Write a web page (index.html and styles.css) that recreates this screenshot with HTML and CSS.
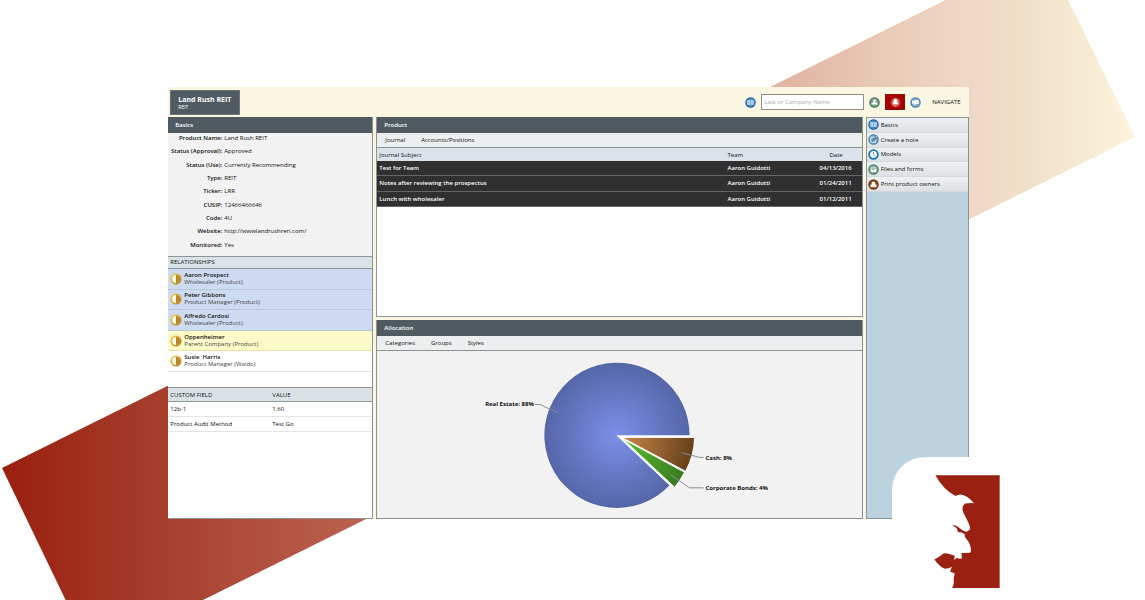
FILE: index.html
```html
<!DOCTYPE html>
<html lang="en">
<head>
<meta charset="utf-8">
<title>Land Rush REIT</title>
<link rel="stylesheet" href="styles.css">
</head>
<body>
<svg class="backdrop" viewBox="0 0 1145 600" preserveAspectRatio="xMidYMin slice" aria-hidden="true">
  <defs>
    <linearGradient id="band" gradientUnits="userSpaceOnUse" x1="0" y1="0" x2="1136" y2="0">
      <stop offset="0" stop-color="#9a1f0f"/><stop offset=".15" stop-color="#a8402e"/><stop offset=".32" stop-color="#b9634e"/>
      <stop offset=".68" stop-color="#dfb3a0"/><stop offset=".78" stop-color="#e9cbb6"/><stop offset=".84" stop-color="#efd5c5"/>
      <stop offset=".9" stop-color="#f0dfc8"/><stop offset="1" stop-color="#fdf4dd"/>
    </linearGradient>
  </defs>
  <path d="M2 468 1000 -27 1055 -27 1135 137 203 600 134 634 82 634Z" fill="url(#band)"/>
</svg>
<main class="app">
  <header class="topbar">
    <div class="client"><h1>Land Rush REIT</h1><p>REIT</p></div>
    <form class="tools">
      <button type="button" class="tool" aria-label="Lists"><svg viewBox="0 0 12 12"><use href="#i-book"/></svg></button>
      <input type="search" aria-label="Search" placeholder="Last or Company Name">
      <button type="button" class="tool" aria-label="Contacts"><svg viewBox="0 0 12 12"><circle cx="6" cy="6" r="5.700" fill="#417558"/><circle cx="6" cy="6" r="4.300" fill="#7aa388"/><path d="M4.800 2.800h2.400v2.600L9.400 7v1.300H2.600V7l2.200-1.600z" fill="#fff"/></svg></button>
      <button type="button" class="tool alert" aria-label="Alerts"><svg viewBox="0 0 12 12"><circle cx="6" cy="6" r="5" fill="#d9605a" stroke="#b93a35"/><path d="M6 2c1.800 0 2 2 2.200 3.600L9.400 8H2.600l1.200-2.400C4 4 4.200 2 6 2zM5 8.600h2L6 9.500z" fill="#fff"/></svg></button>
      <button type="button" class="tool" aria-label="Messages"><svg viewBox="0 0 12 12"><circle cx="6" cy="6" r="5.700" fill="#4580b3"/><circle cx="6" cy="6" r="4.300" fill="#86b1d0"/><path d="M2.400 4.200 9.600 3.200V7.600H6L4.600 9.400 4.400 7.400 2.400 7z" fill="#fff"/></svg></button>
      <span class="nav-title">NAVIGATE</span>
    </form>
  </header>

  <section class="panel side">
    <h2 class="bar">Basics</h2>
    <dl class="facts">
      <dt>Product Name:</dt><dd>Land Rush REIT</dd>
      <dt>Status (Approval):</dt><dd>Approved</dd>
      <dt>Status (Use):</dt><dd>Currently Recommending</dd>
      <dt>Type:</dt><dd>REIT</dd>
      <dt>Ticker:</dt><dd>LRR</dd>
      <dt>CUSIP:</dt><dd>12466466646</dd>
      <dt>Code:</dt><dd>4U</dd>
      <dt>Website:</dt><dd><a href="#">http://wwwlandrushreri.com/</a></dd>
      <dt>Monitored:</dt><dd>Yes</dd>
    </dl>
    <h3 class="subbar">RELATIONSHIPS</h3>
    <ul class="people">
      <li class="blue"><svg viewBox="0 0 12 12"><use href="#i-half"/></svg><div><b>Aaron Prospect</b><span>Wholesaler (Product)</span></div></li>
      <li class="blue"><svg viewBox="0 0 12 12"><use href="#i-half"/></svg><div><b>Peter Gibbons</b><span>Product Manager (Product)</span></div></li>
      <li class="blue"><svg viewBox="0 0 12 12"><use href="#i-half"/></svg><div><b>Alfredo Cardosi</b><span>Wholesaler (Product)</span></div></li>
      <li class="yellow"><svg viewBox="0 0 12 12"><use href="#i-half"/></svg><div><b>Oppenheimer</b><span>Parent Company (Product)</span></div></li>
      <li><svg viewBox="0 0 12 12"><use href="#i-half"/></svg><div><b>Susie&nbsp; Harris</b><span>Product Manager (Waldo)</span></div></li>
    </ul>
    <table class="custom">
      <thead><tr><th>CUSTOM FIELD</th><th>VALUE</th></tr></thead>
      <tbody><tr><td>12b-1</td><td>1.60</td></tr><tr><td>Product Audit Method</td><td>Test Go</td></tr></tbody>
    </table>
  </section>

  <div class="center">
    <section class="panel">
      <h2 class="bar">Product</h2>
      <nav class="tabs"><a href="#">Journal</a><a href="#">Accounts/Positions</a></nav>
      <table class="journal">
        <thead><tr><th>Journal Subject</th><th class="team">Team</th><th class="date">Date</th></tr></thead>
        <tbody>
          <tr><td>Test for Team</td><td>Aaron Guidotti</td><td class="date">04/13/2016</td></tr>
          <tr><td>Notes after reviewing the prospectus</td><td>Aaron Guidotti</td><td class="date">01/24/2011</td></tr>
          <tr><td>Lunch with wholesaler</td><td>Aaron Guidotti</td><td class="date">01/12/2011</td></tr>
        </tbody>
      </table>
    </section>
    <section class="panel grey">
      <h2 class="bar">Allocation</h2>
      <nav class="tabs"><a href="#">Categories</a><a href="#">Groups</a><a href="#">Styles</a></nav>
      <svg class="chart" viewBox="377 351 485 167" role="img" aria-label="Allocation pie chart">
        <defs>
          <radialGradient id="gb" gradientUnits="userSpaceOnUse" cx="617" cy="435.500" r="73"><stop offset="0" stop-color="#7b8fe8"/><stop offset="1" stop-color="#5566a8"/></radialGradient>
          <radialGradient id="gc" gradientUnits="userSpaceOnUse" cx="623" cy="437" r="73"><stop offset="0" stop-color="#c8864a"/><stop offset="1" stop-color="#65401a"/></radialGradient>
          <radialGradient id="gg" gradientUnits="userSpaceOnUse" cx="623" cy="438" r="73"><stop offset="0" stop-color="#58c42f"/><stop offset="1" stop-color="#387820"/></radialGradient>
        </defs>
        <path d="M617 435.500H690A72.700 72.700 0 1 0 670 485.500Z" fill="url(#gb)"/>
        <path d="M617 435.500H690.500V437H695.500L676 488L670.500 486Z" fill="#fff"/>
        <path d="M622 437.500H695A72 72 0 0 1 686 471.500Z" fill="url(#gc)" stroke="#fff"/>
        <path d="M623 438.800 685 472.500A72 72 0 0 1 675 487.500Z" fill="url(#gg)" stroke="#fff"/>
        <g class="leader"><path d="M535 404.500h4q3 0 5 2l14 6"/><path d="M682 453l18 4.500h4"/><path d="M671 475l19 13h14"/></g>
        <g class="label"><text x="534" y="406.500" text-anchor="end">Real Estate: 88%</text><text x="706" y="460">Cash: 8%</text><text x="706" y="490">Corporate Bonds: 4%</text></g>
      </svg>
    </section>
  </div>

  <nav class="navigate">
    <ul>
      <li><a href="#"><svg viewBox="0 0 12 12"><use href="#i-book"/></svg>Basics</a></li>
      <li><a href="#"><svg viewBox="0 0 12 12"><circle cx="6" cy="6" r="5.700" fill="#4780a8"/><circle cx="6" cy="6" r="4.500" fill="#6c9dbf"/><path d="M3 3.500h4M3 3.500V9h5.500V6.500M5 7l4.500-4.500" stroke="#e8f0f6" fill="none"/><path d="M4.600 7.600 8.800 3.400" stroke="#264d70"/></svg>Create a note</a></li>
      <li><a href="#"><svg viewBox="0 0 12 12"><circle cx="6" cy="6" r="5.700" fill="#1674ba"/><circle cx="6" cy="6" r="3.700" fill="#fff"/><path d="M6 3v3l2 1.500" stroke="#7597b5" fill="none"/></svg>Models</a></li>
      <li><a href="#"><svg viewBox="0 0 12 12"><circle cx="6" cy="6" r="5.700" fill="#487f62"/><circle cx="6" cy="6" r="4.300" fill="#8eae9c"/><path d="M3 3.500h6v5.200H3z" fill="#fff"/><path d="M3 4.500h6M4.800 6h2.400" stroke="#487f62" stroke-width=".8"/></svg>Files and forms</a></li>
      <li><a href="#"><svg viewBox="0 0 12 12"><circle cx="6" cy="6" r="5.700" fill="#7b3c12"/><path d="M4 3h3l1 1v2h1.300v3H2.700V6H4z" fill="#fff"/><path d="M4 7.500h4" stroke="#d8b9a0" stroke-width=".7"/></svg>Print product owners</a></li>
    </ul>
  </nav>

  <div class="badge">
    <svg viewBox="222 103 197 338" role="img" aria-label="Company logo"><path fill="#9a2111" d="M226 104H418V440H276Q282 432 281 420Q280 406 284 397L270 391Q270 385 277 377Q264 383 255 383Q239 377 223 355Q240 346 250 337Q262 334 284 344Q284 351 281 357Q287 353 291 350L296 353 305 352 304 336 330 335Q333 332 332 322Q328 303 319 295Q313 290 313 279Q307 273 293 273Q292 261 285 258L276 254Q286 251 294 258Q314 274 321 272Q329 270 330 262C326 240 310 222 307 206Q306 194 315 188Q325 186 341 187Q320 162 301 161Q291 161 286 166Q250 147 226 104Z"/></svg>
  </div>
</main>

<svg class="sprite" aria-hidden="true">
  <defs>
    <linearGradient id="gold" x2="1" y2="1"><stop offset="0" stop-color="#f3c93e"/><stop offset="1" stop-color="#b07c13"/></linearGradient>
    <symbol id="i-half" viewBox="0 0 12 12"><circle cx="6" cy="6" r="4.700" fill="#fffbe6" stroke="url(#gold)" stroke-width="1.600"/><path d="M6 2a4 4 0 0 1 0 8z" fill="#b5862a"/></symbol>
    <symbol id="i-book" viewBox="0 0 12 12"><circle cx="6" cy="6" r="5.700" fill="#1a5f9e"/><circle cx="6" cy="6" r="4.700" fill="#4088c2"/><path d="M2.500 3.200h3.200v5.600H2.500zM6.300 3.200h3.200v5.600H6.300z" fill="#c8def0"/><path d="M4.100 3.200v5.600M7.900 3.200v5.600" stroke="#7eaed6" stroke-width=".7"/></symbol>
  </defs>
</svg>
</body>
</html>
```
FILE: styles.css
```css
* { box-sizing: border-box; }
body {
  margin: 0;
  padding: 87px 0 81px;
  background: #fff;
  color: #111;
  font: 6px/8px "Open Sans", "Noto Sans", sans-serif;
  position: relative;
  overflow-x: hidden;
}
h1, h2, h3, p, dl, dd, ul { margin: 0; padding: 0; font-weight: 600; }
ul { list-style: none; }
a { color: inherit; text-decoration: none; }
svg { display: block; }
table { border-collapse: collapse; width: 100%; }
th, td { text-align: left; padding: 0 2px; font-weight: 500; }
.sprite { position: absolute; width: 0; height: 0; }
.backdrop { position: absolute; top: 0; left: 0; width: 100%; height: 100%; }

.app {
  position: relative;
  width: 69.900%;
  min-height: 432px;
  margin-left: 14.700%;
  display: grid;
  grid-template-columns: 205px 1fr 103px;
  grid-template-rows: 30px 1fr;
  column-gap: 3px;
  background: #fbf6e1;
}
.topbar {
  grid-column: 1 / -1;
  display: flex;
  justify-content: space-between;
  align-items: center;
  padding: 0 8px 0 2px;
}
.client {
  width: 70px;
  padding: 4px 7px;
  background: #4f5b60;
  border: 1px solid #68757a;
  color: #fff;
}
.client h1 { font-size: 7px; line-height: 9px; font-weight: 700; white-space: nowrap; }
.client p { font-size: 5px; line-height: 6px; font-weight: 400; }

.tools { display: flex; align-items: center; gap: 5px; }
.tool { width: 11px; height: 16px; padding: 0; border: 0; background: none; display: grid; place-items: center; }
.tool svg { width: 11px; height: 11px; }
.tool.alert { width: 20px; background: #a80000; border: 1px solid #8d0f0c; }
.tools input {
  width: 103px;
  height: 16px;
  padding: 0 2px;
  border: 1px solid #8f8f86;
  border-radius: 0;
  background: #fff;
  font: inherit;
  appearance: none;
}
.tools input::placeholder { color: #aaa; }
.nav-title { margin-left: 6px; font-weight: 400; }

.panel { background: #fff; border: 1px solid #8b9493; border-top: 0; }
.side { border-left: 0; }
.grey { background: #f2f2f2; }
.bar {
  height: 16px;
  padding: 0 7px;
  background: #4f5b60;
  color: #fff;
  font-size: 6px;
  line-height: 16px;
}
.facts {
  display: grid;
  grid-template-columns: 54px 1fr;
  grid-auto-rows: 1fr;
  column-gap: 2px;
  min-height: 123px;
  padding: 1px 0 2px;
  background: #f2f2f2;
}
.facts dt { text-align: right; font-weight: 600; white-space: nowrap; }
.facts dd { font-weight: 500; }
.subbar, .custom th { background: #dae2e6; border: solid #8b9799; border-width: 1px 0; font-size: 6px; font-weight: 500; }
.subbar { height: 13px; padding: 0 2px; line-height: 11px; }
.people { display: grid; grid-auto-rows: 1fr; min-height: 103px; margin-bottom: 15px; }
.people li { display: flex; align-items: center; gap: 2px; padding-left: 2px; border-bottom: 1px solid #e4e4e4; }
.people svg { width: 12px; height: 12px; }
.people b, .people span { display: block; line-height: 7px; }
.people b { font-weight: 600; }
.people span { color: #444; font-weight: 400; }
.people .blue { background: #cedaef; border-color: #b8c8da; }
.people .yellow { background: #fdfac9; border-color: #e6e2a8; }
.custom th { height: 14px; }
.custom td { height: 15px; border-bottom: 1px solid #e4e4e4; }
.custom th:first-child { width: 50%; }

.center { display: grid; grid-template-rows: 1fr 1fr; row-gap: 3px; }
.tabs {
  display: flex;
  gap: 16px;
  height: 15px;
  padding: 0 8px;
  background: #ebeff0;
  border-bottom: 1px solid #8b9493;
  line-height: 15px;
  font-weight: 500;
}
.journal { height: 59px; }
.journal thead tr { height: 13px; background: #dbe2ea; }
.journal tbody { background: #303030; color: #fff; }
.journal tbody td { font-weight: 600; border-bottom: 1px solid #666; }
.journal .team { width: 92px; }
.journal .date { width: 42px; text-align: right; padding-right: 10px; }
.journal th.date { padding-right: 19px; }
.chart { width: 100%; }
.leader { fill: none; stroke: #8c8c98; stroke-width: 1; }
.label { font-size: 6px; font-weight: 700; fill: #111; }

.navigate { background: #bcd3df; border: 1px solid #8b9493; }
.navigate ul { display: grid; grid-auto-rows: 1fr; min-height: 74px; }
.navigate li { border-bottom: 1px solid #d3dadd; background: linear-gradient(#eef1f3, #dce1e5); }
.navigate a { display: flex; align-items: center; gap: 2px; height: 100%; padding-left: 1px; font-weight: 500; }
.navigate svg { width: 11px; height: 11px; }

.badge {
  position: absolute;
  right: -50px;
  bottom: -81px;
  width: 127px;
  height: 143px;
  padding: 18px 19px 0 42px;
  border-top-left-radius: 33px;
  background: #fff;
}
.badge svg { width: 100%; }
```
